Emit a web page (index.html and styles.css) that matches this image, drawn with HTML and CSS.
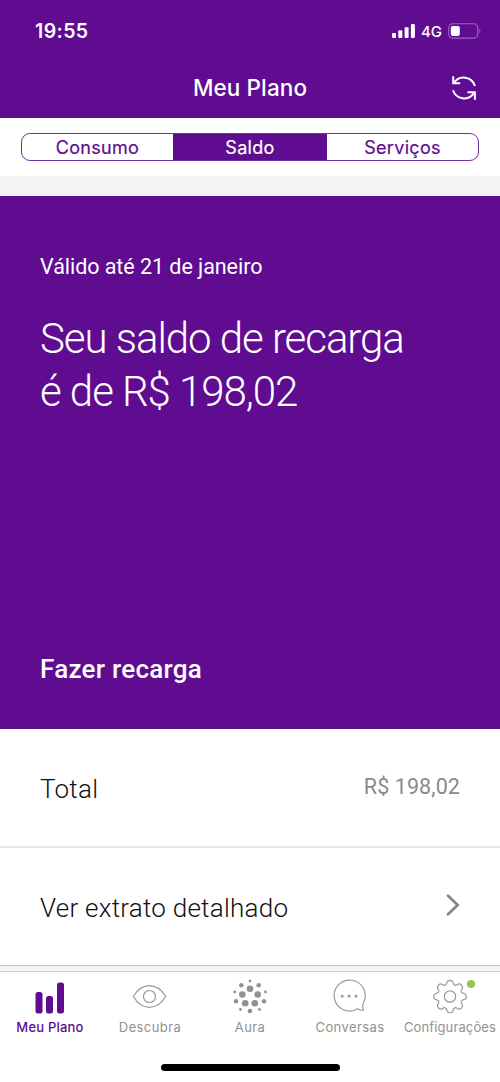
FILE: index.html
```html
<!DOCTYPE html>
<html lang="pt-BR">
<head>
<meta charset="utf-8">
<title>Meu Plano</title>
<link rel="stylesheet" href="styles.css">
</head>
<body>
<div class="app">
  <header class="header">
    <div class="status">
      <span class="time">19:55</span>
      <div class="status-right">
        <svg width="24" height="16" viewBox="0 0 24 16" fill="#fff"><rect x="0" y="10" width="4" height="5" rx="1"/><rect x="6.3" y="7.3" width="4" height="7.7" rx="1"/><rect x="12.6" y="4.2" width="4" height="10.8" rx="1"/><rect x="18.9" y="1" width="4" height="14" rx="1"/></svg>
        <span class="network">4G</span>
        <svg width="34" height="16" viewBox="0 0 34 16"><rect x=".7" y=".7" width="29" height="14.4" rx="4" fill="none" stroke="#9a67bd" stroke-width="1.1"/><rect x="2.8" y="2.9" width="9" height="10" rx="1.8" fill="#fff"/><path d="M31.4 5.4q2 2.3 0 5z" fill="#9a67bd"/></svg>
      </div>
    </div>
    <div class="titlebar">
      <h1 class="title">Meu Plano</h1>
      <svg class="refresh" width="26" height="26" viewBox="0 0 26 26" fill="none" stroke="#fff" stroke-width="2"><path d="M24 11C21 1.800 8.500-1 2.800 8.400M2.200 1.300V8.200H9.200M2 15.200C5 24.200 17.500 27 23.200 17.600M16.500 17.300H23.900V24.700"/></svg>
    </div>
  </header>
  <nav class="segments">
    <div class="segmented">
      <span class="segment">Consumo</span>
      <span class="segment selected">Saldo</span>
      <span class="segment">Serviços</span>
    </div>
  </nav>
  <main class="content">
    <section class="balance">
      <p class="validity">Válido até 21 de janeiro</p>
      <h2 class="amount"><span class="line">Seu saldo de recarga</span><span class="line">é de R$ 198,02</span></h2>
      <a class="recharge">Fazer recarga</a>
    </section>
    <div class="row">
      <span class="label">Total</span>
      <span class="value">R$ 198,02</span>
    </div>
    <div class="row details">
      <span class="label">Ver extrato detalhado</span>
      <svg class="chevron" width="16" height="24" viewBox="0 0 16 24" fill="none" stroke="#858585" stroke-width="2.7" stroke-linecap="round"><path d="M4 2.700L13.700 12L4 21.300"/></svg>
    </div>
  </main>
  <footer class="tabs">
    <div class="tab active">
      <svg class="icon" width="40" height="36" viewBox="-20 -18 40 36" fill="#5f0c91"><rect x="-14.500" y="-5" width="7" height="21.500" rx="2.500"/><rect x="-4" y="-1" width="7" height="17.500" rx="2.500"/><rect x="7" y="-14.500" width="7" height="31" rx="2.500"/></svg>
      <span>Meu Plano</span>
    </div>
    <div class="tab">
      <svg class="icon" width="40" height="36" viewBox="-19.500 -17.500 40 36" fill="none" stroke="#999" stroke-width="1.200"><path d="M-16.200 0C-7.500-14.500 7.500-14.500 16.200 0C7.500 14.500-7.500 14.500-16.200 0Z"/><circle r="6"/></svg>
      <span>Descubra</span>
    </div>
    <div class="tab">
      <svg class="icon" width="40" height="36" viewBox="-20 -17.500 40 36" fill="#929292"><circle cy="-15.500" r="1.400"/><circle cx="-8.700" cy="-11.200" r="2.300"/><circle cx="8.700" cy="-11.200" r="2.300"/><circle cy="-7.700" r="3.300"/><circle cx="-15.300" cy="-4.500" r="1.400"/><circle cx="15.500" cy="-4.500" r="1.400"/><circle cx="-7.700" cy="-2" r="3.300"/><circle cx="7.700" cy="-2" r="3.300"/><circle cx="-14" cy="4.700" r="2.300"/><circle cx="14" cy="4.700" r="2.300"/><circle cx="-4.800" cy="6.700" r="3.300"/><circle cx="4.800" cy="6.700" r="3.300"/><circle cx="-9.500" cy="13" r="1.400"/><circle cx="9.500" cy="13" r="1.400"/><circle cy="14.500" r="2.300"/></svg>
      <span>Aura</span>
    </div>
    <div class="tab">
      <svg class="icon" width="40" height="36" viewBox="-19.200 -17.500 40 36" fill="none" stroke="#999" stroke-width="1.200"><path d="M14 6.700A15.500 15.500 0 1 0 8.600 12.300Q11 14.200 14.200 13.600Q13.100 10.200 14 6.700Z"/><g fill="#999" stroke="none"><circle cx="-7" cy="-.3" r="1.400"/><circle cx="-.1" cy="-.3" r="1.400"/><circle cx="6.700" cy="-.3" r="1.400"/></g></svg>
      <span>Conversas</span>
    </div>
    <div class="tab">
      <svg class="icon" width="40" height="36" viewBox="-20 -17.500 40 36" fill="none" stroke="#999" stroke-width="1.200">
        <defs><path id="tooth" d="M-4.700-11.350C-3.300-11.930-3.300-12.700-3-14.200C-2.500-16.900 2.500-16.900 3-14.200C3.300-12.700 3.300-11.930 4.700-11.350"/></defs>
        <use href="#tooth"/><use href="#tooth" transform="rotate(45)"/><use href="#tooth" transform="rotate(90)"/><use href="#tooth" transform="rotate(135)"/><use href="#tooth" transform="rotate(180)"/><use href="#tooth" transform="rotate(225)"/><use href="#tooth" transform="rotate(270)"/><use href="#tooth" transform="rotate(315)"/><circle r="5.700"/>
      </svg>
      <i class="badge"></i>
      <span class="settings">Configurações</span>
    </div>
  </footer>
  <div class="home"><div class="home-bar"></div></div>
</div>
</body>
</html>
```
FILE: styles.css
```css
* { box-sizing: border-box; }
body { margin: 0; background: #fff; font-family: Roboto, sans-serif; }
h1, h2, p { margin: 0; }
svg { display: block; flex: none; }
.app { width: 500px; height: 1082px; display: flex; flex-direction: column; overflow: hidden; }
.header { height: 118px; background: #5f0c91; color: #fff; font-family: Inter, sans-serif; }
.status { height: 62px; padding: 0 18px 0 35px; display: flex; align-items: center; justify-content: space-between; }
.time { font-size: 19.5px; font-weight: 600; letter-spacing: .4px; }
.status-right { display: flex; align-items: center; }
.network { width: 32px; padding-left: 5px; font-size: 15px; font-weight: 500; }
.titlebar { height: 52px; padding: 0 23px; display: grid; grid-template-columns: 26px 1fr 26px; align-items: center; }
.title { grid-column: 2; padding-bottom: 2px; text-align: center; font-size: 22.5px; font-weight: 500; letter-spacing: .1px; }
.segments { height: 58px; padding: 15px 21px; }
.segmented { height: 28px; display: grid; grid-template-columns: 151px 154px 1fr; border: 1px solid #713599; border-radius: 9px; overflow: hidden; }
.segment { display: flex; align-items: center; justify-content: center; padding-top: 1px; font: 400 18px/26px Inter, sans-serif; letter-spacing: .3px; color: #5f0c91; -webkit-text-stroke: .2px currentColor; }
.selected { background: #5f0c91; color: #fff; }
.content { height: 795px; padding-top: 20px; background: #f4f4f4; }
.balance { height: 533px; padding: 58px 40px 0; background: #5f0c91; color: #fff; }
.validity { font-size: 21.5px; line-height: 25px; letter-spacing: -.05px; }
.amount { height: 374px; padding-top: 33px; font-size: 42px; line-height: 53px; font-weight: 300; }
.line { display: block; white-space: nowrap; letter-spacing: -1.05px; }
.recharge { display: block; font-size: 26px; line-height: 32px; font-weight: 500; letter-spacing: .27px; }
.row { height: 119px; padding: 0 40px 2px; display: flex; align-items: center; justify-content: space-between; background: #fff; border-bottom: 2px solid #e8e8e8; }
.details { height: 118px; border-bottom: 1px solid #c6c6c6; }
.label { padding-top: 4px; font-size: 26px; font-weight: 300; letter-spacing: .25px; color: #111; }
.chevron { margin-bottom: 2px; }
.value { font-size: 21.5px; letter-spacing: .1px; color: #8a8a8a; }
.tabs { height: 81px; padding-top: 7px; display: grid; grid-template-columns: repeat(5, 100px); border-top: 1px solid #d0d0d0; }
.tab { position: relative; display: flex; flex-direction: column; align-items: center; color: #929292; font: 400 13px/17px Inter, sans-serif; letter-spacing: .4px; }
.icon { margin-bottom: 4px; }
.active { color: #5f0c91; font-weight: 500; letter-spacing: .2px; }
.settings { letter-spacing: .12px; }
.badge { position: absolute; left: 66.5px; top: .5px; width: 8px; height: 8px; border-radius: 50%; background: #9fc54d; }
.home { height: 30px; display: flex; justify-content: center; padding-top: 12px; }
.home-bar { width: 179px; height: 7px; border-radius: 4px; background: #000; }
```
